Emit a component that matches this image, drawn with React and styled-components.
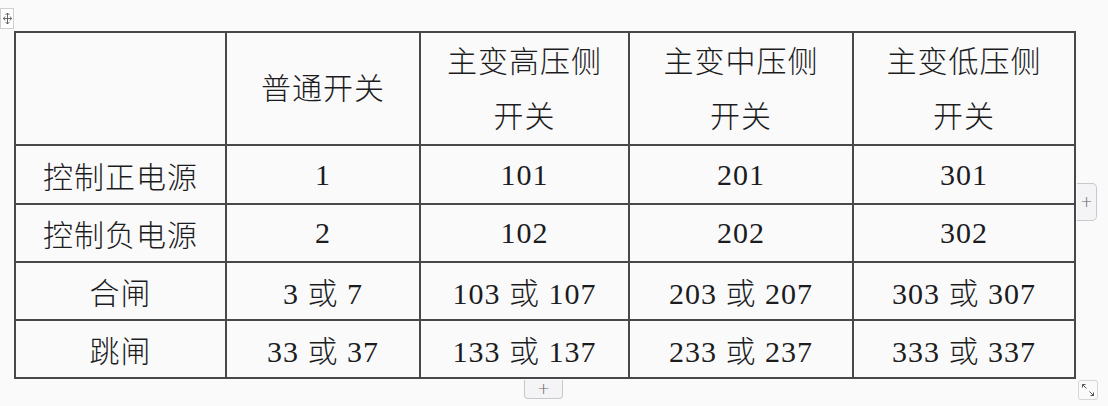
import React from "react";
import styled, { createGlobalStyle } from "styled-components";

const Global = createGlobalStyle`
  html, body {
    margin: 0;
    background: #fafafb;
  }
`;

const widths = [211, 194, 209, 224, 222];

const header = [
  ["普通开关"],
  ["主变高压侧", "开关"],
  ["主变中压侧", "开关"],
  ["主变低压侧", "开关"],
];

const rows = [
  ["控制正电源", "1", "101", "201", "301"],
  ["控制负电源", "2", "102", "202", "302"],
  ["合闸", "3 或 7", "103 或 107", "203 或 207", "303 或 307"],
  ["跳闸", "33 或 37", "133 或 137", "233 或 237", "333 或 337"],
];

const App = () => {
  return (
    <Sheet>
      <Global />
      <MoveHandle>
        <svg width="11" height="13" viewBox="0 0 11 13">
          <path
            d="M5.5 1v11M1.5 6.5h8M3.5 3l2-2 2 2M3.5 10l2 2 2-2M3 4.5l-1.5 2 1.5 2M8 4.5l1.5 2-1.5 2"
            stroke="#555"
            strokeWidth="0.9"
            fill="none"
          />
        </svg>
      </MoveHandle>
      <Frame>
        <Grid>
          <colgroup>
            {widths.map((w, i) => (
              <Col key={i} $w={w} />
            ))}
          </colgroup>
          <tbody>
            <Row $h={113}>
              <Cell />
              {header.map((lines, i) => (
                <HeadCell key={i}>
                  {lines.map((l, j) => (
                    <Line key={j}>{l}</Line>
                  ))}
                </HeadCell>
              ))}
            </Row>
            {rows.map((r, i) => (
              <Row key={i} $h={i === 0 ? 59 : 58}>
                {r.map((c, j) => (
                  <Cell key={j}>{c}</Cell>
                ))}
              </Row>
            ))}
          </tbody>
        </Grid>
        <AddColumn>+</AddColumn>
        <AddRow>+</AddRow>
        <Resize>
          <svg width="14" height="14" viewBox="0 0 14 14">
            <path
              d="M1.5 1.5l4 4M1.5 1.5h3M1.5 1.5v3M12.5 12.5l-4-4M12.5 12.5h-3M12.5 12.5v-3"
              stroke="#555"
              strokeWidth="1"
              fill="none"
            />
          </svg>
        </Resize>
      </Frame>
    </Sheet>
  );
};

export default App;

const Sheet = styled.div`
  position: relative;
  box-sizing: border-box;
  height: 406px;
  padding: 31px 0 0 14px;
`;

const Frame = styled.div`
  position: relative;
  display: inline-block;
`;

const Grid = styled.table`
  border-collapse: collapse;
  table-layout: fixed;
  font-family: "Liberation Serif", "Noto Sans CJK SC", serif;
  font-size: 30px;
  font-weight: 300;
  color: #1c1c1e;
`;

const Col = styled.col`
  width: ${(p) => p.$w}px;
`;

const Row = styled.tr`
  height: ${(p) => p.$h}px;
`;

const Cell = styled.td`
  border: 2px solid #48484a;
  padding: 0;
  text-align: center;
  vertical-align: middle;
  letter-spacing: 1px;
  white-space: nowrap;
`;

const HeadCell = styled(Cell)`
  line-height: 55px;
`;

const Line = styled.div``;

const MoveHandle = styled.div`
  position: absolute;
  left: 0;
  top: 8px;
  width: 12px;
  height: 19px;
  border: 1px solid #d0d0d4;
  background: #fff;
  display: grid;
  place-items: center;
`;

const Tab = styled.div`
  position: absolute;
  box-sizing: border-box;
  background: #f4f4f6;
  border: 1px solid #c8c8cc;
  color: #666;
  font-family: "DejaVu Sans", sans-serif;
  font-size: 15px;
  font-weight: 300;
  display: grid;
  place-items: center;
`;

const AddColumn = styled(Tab)`
  left: 100%;
  top: 152px;
  margin-left: 1px;
  width: 20px;
  height: 38px;
  border-left: none;
  border-radius: 0 5px 5px 0;
`;

const AddRow = styled(Tab)`
  top: 100%;
  left: 510px;
  margin-top: 1px;
  width: 39px;
  height: 19px;
  border-top: none;
  border-radius: 0 0 4px 4px;
`;

const Resize = styled(Tab)`
  left: 100%;
  top: 100%;
  margin-left: 2px;
  margin-top: 1px;
  width: 20px;
  height: 20px;
  border-radius: 3px;
  background: #fafafb;
  border-color: #d6d6da;
`;
